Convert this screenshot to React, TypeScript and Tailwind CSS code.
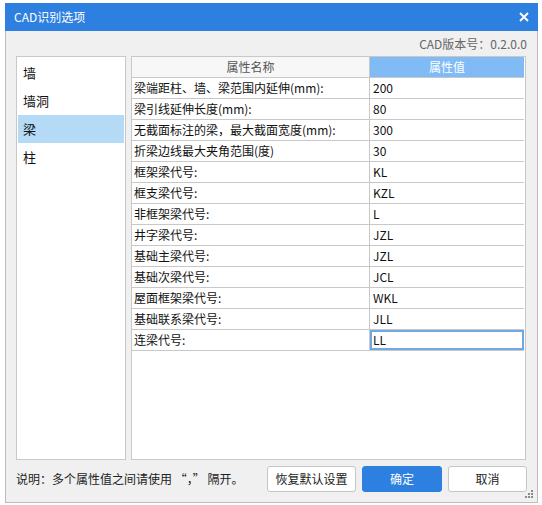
import React from "react";

const rows: [string, string][] = [
  ["梁端距柱、墙、梁范围内延伸(mm):", "200"],
  ["梁引线延伸长度(mm):", "80"],
  ["无截面标注的梁，最大截面宽度(mm):", "300"],
  ["折梁边线最大夹角范围(度)", "30"],
  ["框架梁代号:", "KL"],
  ["框支梁代号:", "KZL"],
  ["非框架梁代号:", "L"],
  ["井字梁代号:", "JZL"],
  ["基础主梁代号:", "JZL"],
  ["基础次梁代号:", "JCL"],
  ["屋面框架梁代号:", "WKL"],
  ["基础联系梁代号:", "JLL"],
  ["连梁代号:", "LL"],
];

const categories = ["墙", "墙洞", "梁", "柱"];

const ResizeGrip = () => (
  <div className="absolute right-[4px] bottom-[4px] grid grid-cols-3 gap-[1px]">
    <span className="w-[2px] h-[2px]" />
    <span className="w-[2px] h-[2px]" />
    <span className="w-[2px] h-[2px] bg-[#8a8a8a]" />
    <span className="w-[2px] h-[2px]" />
    <span className="w-[2px] h-[2px] bg-[#8a8a8a]" />
    <span className="w-[2px] h-[2px] bg-[#8a8a8a]" />
    <span className="w-[2px] h-[2px] bg-[#8a8a8a]" />
    <span className="w-[2px] h-[2px] bg-[#8a8a8a]" />
    <span className="w-[2px] h-[2px] bg-[#8a8a8a]" />
  </div>
);

export default function App() {
  return (
    <div className="w-[542px] h-[505px] bg-white pt-[3px] pl-[5px] font-['Noto_Sans_CJK_SC','Noto_Sans',sans-serif] text-[12px] leading-[16px] text-[#111]">
      <div className="relative w-[533px] h-[500px] bg-[#f0f0f0] border-x border-b border-[#bdbdbd]">
        {/* title bar */}
        <div className="-mx-px h-[28px] bg-[#2e80e0] flex items-center justify-between pl-[9px] pr-[8px] text-white">
          <span className="text-[12px]">CAD识别选项</span>
          <svg width="10" height="10" viewBox="0 0 10 10" className="mr-[1px]">
            <path d="M1 1 L9 9 M9 1 L1 9" stroke="white" strokeWidth="1.8" />
          </svg>
        </div>

        <div className="h-[25px] flex items-center justify-end pr-[10px] text-[#666]">
          CAD版本号：0.2.0.0
        </div>

        <div className="h-[404px] flex gap-[5px] px-[10px]">
          {/* category list */}
          <div className="w-[110px] bg-white border border-[#c8c8c8] p-px pt-[2px]">
            {categories.map((c) => (
              <div
                key={c}
                className={
                  "h-[28px] flex items-center pl-[5px] text-[13px] " +
                  (c === "梁" ? "bg-[#b5daf6]" : "")
                }
              >
                {c}
              </div>
            ))}
          </div>

          {/* property table */}
          <div className="w-[395px] bg-white border border-[#c8c8c8]">
            <div className="grid grid-cols-[238px_154px]">
              <div className="h-[21px] flex items-center justify-center bg-[#f7f7f7] border-r border-b border-[#c8c8c8] text-[#555]">
                属性名称
              </div>
              <div className="h-[21px] flex items-center justify-center bg-[#80bbf5] border-b border-[#c8c8c8] text-white">
                属性值
              </div>
              {rows.map(([name, value], i) => (
                <React.Fragment key={i}>
                  <div className="h-[21px] flex items-center pl-[2px] border-r border-b border-[#c8c8c8]">
                    {name}
                  </div>
                  <div
                    className={
                      "h-[21px] flex items-center pl-[3px] border-b border-[#c8c8c8] " +
                      (i === rows.length - 1 ? "shadow-[inset_0_0_0_2px_#6ea8e6]" : "")
                    }
                  >
                    {value}
                  </div>
                </React.Fragment>
              ))}
            </div>
          </div>
        </div>

        {/* footer */}
        <div className="mt-[6px] h-[26px] flex items-center pl-[10px] pr-[10px]">
          <span className="flex-1 text-[#222]">说明：多个属性值之间请使用 “，” 隔开。</span>
          <div className="flex gap-[6px]">
            <button className="w-[89px] h-[26px] bg-white border border-[#c6c6c6] rounded-[3px] text-[#222]">
              恢复默认设置
            </button>
            <button className="w-[80px] h-[26px] bg-[#2e80e0] border border-[#2e80e0] rounded-[3px] text-white">
              确定
            </button>
            <button className="w-[79px] h-[26px] bg-white border border-[#c6c6c6] rounded-[3px] text-[#222]">
              取消
            </button>
          </div>
        </div>

        <ResizeGrip />
      </div>
    </div>
  );
}
